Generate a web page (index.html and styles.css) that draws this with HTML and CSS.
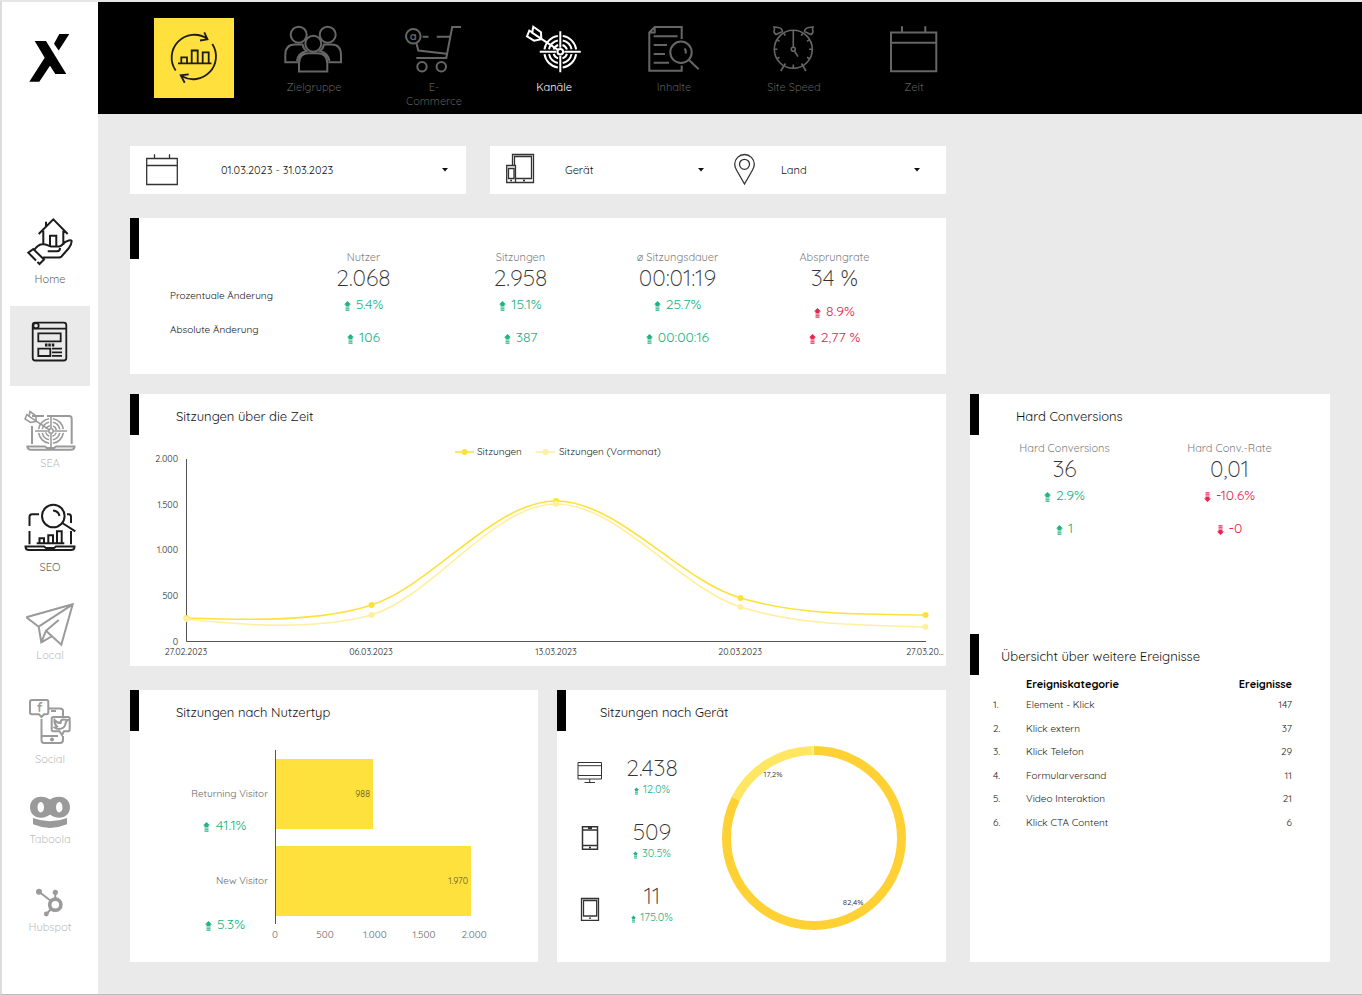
FILE: index.html
```html
<!DOCTYPE html>
<html lang="de">
<head>
<meta charset="utf-8">
<title>Kanäle – Dashboard</title>
<meta name="viewport" content="width=device-width, initial-scale=1">
<link rel="stylesheet" href="styles.css">
</head>
<body>
<svg class="defs" aria-hidden="true">
  <symbol id="arrow" viewBox="0 0 7 10"><path d="M3.5 0L7 3.5H5.5V5h-4V3.500H0zM1.500 5.600h4v1h-4zM1.500 7.200h4v1h-4zM1.500 8.800h4v1h-4z" fill="currentColor"/></symbol>
  <symbol id="target" viewBox="-35 -26 70 52" overflow="visible">
    <g fill="none" stroke="currentColor" stroke-width="2">
      <path d="M0-20.500V-4M0 4V20.500M-20.500 0H-4M4 0H20.500"/>
      <circle r="16" pathLength="4" stroke-dasharray=".8 .2" stroke-dashoffset="-.1"/>
      <circle r="11.500" pathLength="4" stroke-dasharray=".72 .28" stroke-dashoffset="-.14"/>
      <circle r="7" pathLength="4" stroke-dasharray=".6 .4" stroke-dashoffset="-.2"/>
      <circle r="2.800"/>
      <path d="M-2-1.500L-29-19.500M-27-25L-19.300-19.400-19-12.400-26.300-11-33.300-15.400-31-21-28-19.400z"/>
    </g>
  </symbol>
</svg>

<div class="page">
  <aside class="sidebar">
    <svg class="sidebar__logo" viewBox="0 0 80 48" role="img" aria-label="Logo"><path d="M49.300 0H59.300L48.700 16.500 44 9.700zM24.700 7H36L56.300 40H45.300L40 31.700 29.300 47.700H19.300L34.700 23.700z"/></svg>
    <nav class="sidebar__nav" aria-label="Bereiche">
      <a class="item item--on" href="#home">
        <svg class="icon icon--48" viewBox="0 0 80 48"><path d="M28.700 16L43.300 1.300 57.700 16M36 8.500V3.700M33.300 12.700V26M53.300 12.700V27M40 27.500V17.700H46.300V28.500M24.300 32C27 28 29 26.500 32 26.300 36 25.500 38 28 41 28.500H49.500C52 28 54 24 56.700 23.300 59 22.300 61 22 61.700 23 61.500 27 60 28.500 58.500 30.500L51.500 38.500Q50.500 39.500 49 39.500H33M37.700 33.300H47Q50 33.300 50 30M26 42.500L18.300 34.700 23.300 31 34 41.500 29.500 46 27.500 44"/></svg>
        <span class="item__label">Home</span></a>
      <a class="tile tile--grey" href="#website" aria-label="Website">
        <svg class="tile__icon" viewBox="0 0 80 80"><g stroke-width="1.800"><rect x="22.700" y="16.700" width="33.600" height="37.800" rx="2.500"/><path d="M22.700 22.700H56.300M28.300 27.300H50.700V35.300H28.300zM28.300 42.700H40.300V50H28.300zM42 42.700H52M42 46.300H52M42 49.800H52" /><circle cx="26" cy="19.700" r="2.700"/><path d="M35 39h2.500M38.300 39h2.500M41.800 39h2.500" stroke-width="3"/></g></svg></a>
      <a class="item" href="#sea">
        <svg class="icon icon--40" viewBox="0 0 80 40"><path d="M34 6H22M22 16V34M37 6H59Q61.700 6 61.700 9V34M17.300 36.500H35L37 38H44L46 36.500H64.500Q64.500 39.700 61 39.700H21Q17.500 39.700 17.300 36.500z"/><use href="#target" x="13.700" y=".7" width="54.600" height="40.600"/></svg>
        <span class="item__label">SEA</span></a>
      <a class="item item--on" href="#seo">
        <svg class="icon icon--48" viewBox="0 0 80 48"><path d="M29 8.300H22Q19.500 8.300 19.500 11V20M19.500 25V38.300M57 8.300H59Q61 8.300 61 11V17M61 25V38.300M15.500 40.500H34L36 42H44L46 40.500H64.500Q64.500 44 61 44H19Q15.500 44 15.500 40.500zM26.700 37.300H54.300M29.500 37V32.300H34V37M38.300 37V29.300H43V37M47 37V25.300H51.700V37M52.300 17L65.300 25.300M43 4.500Q48.500 5 49.500 10"/><circle cx="43.300" cy="10" r="11.300"/></svg>
        <span class="item__label">SEO</span></a>
      <a class="item" href="#local">
        <svg class="icon icon--40" viewBox="0 0 80 40"><path d="M16.300 15.300L62.700 2.300 51.300 42.700 36 28.700 48.700 18M28.700 24.700L62.700 2.300M16.300 15.300L28.700 24.700 31.300 40.300 41.500 34.500M36 28.700L31.300 40.300"/></svg>
        <span class="item__label">Local</span></a>
      <a class="item" href="#social">
        <svg class="icon icon--48" viewBox="0 0 80 48"><path d="M22 2H36.500Q38.300 2 38.300 4V14.500Q38.300 16.300 36.500 16.300H34L31.500 19 29 16.300H22Q20 16.300 20 14.500V4Q20 2 22 2zM31.500 21V42Q31.500 45 34 45H50Q53 45 53 42V38M38.500 10.500H50Q53 10.500 53 13V18M41 13H46M32 38H48M43.500 19H58Q59.700 19 59.700 21V31.500Q59.700 33.300 58 33.300H54L52 37 49.500 33.300H43.500Q41.700 33.300 41.700 31.500V21Q41.700 19 43.500 19zM44.500 22Q47 25 50.500 25 50.500 21.500 53.500 21.500 55 21.500 57.500 22 55.500 24 55.500 26 54 31 49 31 46 31 44.500 29.500L47 28.500Q44 26 44.500 22z"/><circle cx="42" cy="41.500" r="1"/><text class="icon__letter" x="29.500" y="14" font-size="13">f</text></svg>
        <span class="item__label">Social</span></a>
      <a class="item" href="#taboola">
        <svg class="icon icon--32" viewBox="0 0 80 32"><path class="solid" fill-rule="evenodd" d="M30.700 2.700C34.500 2.700 38 3.800 40 5.500 42 3.800 45.500 2.700 49.300 2.700 55.500 2.700 60 7 60 13.200S55.500 23.700 49.300 23.700C45.500 23.700 42 22.500 40 20.500 38 22.500 34.500 23.700 30.700 23.700 24.500 23.700 20 19.500 20 13.200S24.500 2.700 30.700 2.700zM30.700 8C28.900 8 27.500 10.300 27.500 13.200S28.900 18.400 30.700 18.400 34 16 34 13.200 32.500 8 30.700 8zM49.300 8C47.500 8 46 10.300 46 13.200S47.500 18.400 49.300 18.400 52.500 16 52.500 13.200 51.100 8 49.300 8zM23 24Q40 30.500 57 24V30.300Q40 37.500 23 30.300z"/></svg>
        <span class="item__label">Taboola</span></a>
      <a class="item" href="#hubspot">
        <svg class="icon icon--24" viewBox="0 0 80 24"><circle cx="45.300" cy="14.700" r="5.600" stroke-width="3.600"/><path d="M30 2.500L41 11M45.300 3V9M37 23.500L41 19" stroke-width="2"/><g class="solid"><circle cx="29" cy="1.700" r="3"/><circle cx="45.300" cy="2.300" r="2.600"/><circle cx="36.300" cy="24" r="2.400"/></g></svg>
        <span class="item__label">Hubspot</span></a>
    </nav>
  </aside>

  <div class="content">
    <header class="topbar">
      <a class="tile tile--yellow" href="#overview" aria-label="Übersicht">
        <svg class="tile__icon" viewBox="0 0 80 80"><path stroke-width="1.800" d="M21.700 52.500A22.800 22.800 0 0 1 53 20.500M58.300 26A22.800 22.800 0 0 1 27.500 58M50.300 14.300L53.500 21.300 46 22.500M34.700 56.300L26.700 57.300 30.700 64.700M24 45.300H57.500M27.300 45V39.300H33V45M37.700 45V32.500H43.700V45M48.700 45V34.300H54.700V45"/></svg></a>
      <nav class="topbar__nav" aria-label="Berichte">
        <a class="item" href="#zielgruppe">
          <svg class="icon icon--48" viewBox="0 0 80 48"><circle cx="24.700" cy="8.700" r="8"/><circle cx="53.700" cy="8.700" r="8"/><circle cx="39.300" cy="17.700" r="8"/><path d="M25 45.500V37.500Q25 27.300 35 27.300H43Q53.300 27.300 53.300 37.500V45.500zM24 36.300H11.300V29Q11.300 18.500 21 18.500H28.500Q29.500 23 32.500 25 24 27 23 35M54.500 36.300H67V29Q67 18.500 57.500 18.500H50Q49 23 46 25 54 27 55.500 35"/></svg>
          <span class="item__label">Zielgruppe</span></a>
        <a class="item" href="#ecommerce">
          <svg class="icon icon--48" viewBox="0 0 80 48"><circle cx="19.300" cy="10.300" r="7.300"/><text class="icon__letter" x="19.300" y="14" font-size="11">a</text><path d="M67 1H58.200L52.300 32H22.300M28.700 10.700H34.500M42.700 10.700H55.500M22.500 17.500L24.300 24.500 52.700 27.700"/><circle cx="28" cy="40.700" r="4.700"/><circle cx="47.300" cy="40.700" r="4.700"/></svg>
          <span class="item__label">E-Commerce</span></a>
        <a class="item item--on" href="#kanaele" aria-current="page">
          <svg class="icon icon--48" viewBox="0 0 80 48"><use href="#target" x="11.300" y="-.3" width="70" height="52"/></svg>
          <span class="item__label">Kanäle</span></a>
        <a class="item" href="#inhalte">
          <svg class="icon icon--48" viewBox="0 0 80 48"><path d="M47.700 13V1H20.700L15.300 6.500V44.700H47.700V39.500M20.700 1V6.500H15.300M19.700 10.300H43.500M19.700 19H33M19.700 28H31M19.700 36.700H35M55 34L64.700 43.300M50.500 22.500Q52.500 24.500 51.500 27.500"/><circle cx="47" cy="26.300" r="10.700"/></svg>
          <span class="item__label">Inhalte</span></a>
        <a class="item" href="#sitespeed">
          <svg class="icon icon--48" viewBox="0 0 80 48"><g stroke-width="1.600"><circle cx="39.300" cy="23.300" r="19"/><circle cx="39.300" cy="23.300" r="2"/><path d="M39.300 21V5M40.500 25L44 30.700M31.500 37.500L26.700 45M47.500 37.500L52 45M20.500 23.300H23.500M55 23.300H58M39.300 38.500V42M30 7.500L31.300 9.700M48.700 7.500L47.300 9.700M23.500 14L25.500 15.300M55 14L53 15.300M23.500 32.500L25.500 31.300M55 32.500L53 31.300M20 1L24 1.500Q28 2 28.500 5.500L22 8.500Q19 6.500 20.500 3.500zM59 1L55 1.500Q51 2 50.500 5.500L57 8.500Q60 6.500 58.500 3.500z"/></g></svg>
          <span class="item__label">Site Speed</span></a>
        <a class="item" href="#zeit">
          <svg class="icon icon--48" viewBox="0 0 80 48"><path d="M17 6.500H62.300V45.300H17zM17 16.700H62.300M28 .3V6.500M51.300 .3V6.500"/></svg>
          <span class="item__label">Zeit</span></a>
      </nav>
    </header>

    <main class="main">
      <div class="filters">
        <button class="filter filter--date" type="button">
          <svg class="filter__cal" viewBox="0 0 32 32"><path d="M.7 4.500H31.300V30.500H.7zM.7 11.500H31.300M8.500 .3V4.500M23.500 .3V4.500"/></svg>
          <span class="filter__text">01.03.2023 - 31.03.2023</span>
          <svg class="caret" viewBox="0 0 6 4"><path d="M0 0H6L3 3.500z"/></svg>
        </button>
        <div class="filter filter--pair">
          <div class="picker">
            <label class="picker__icon" for="device" aria-label="Gerät"><svg viewBox="0 0 75 48"><path d="M22.500 19V8.500H43.500V36.500H26M24.500 19V10.500H41.500V32.500H26M16.700 19.500H25.500V36.500H16.700zM18.500 22.500H24V32.500H18.500zM33 34.500H35M20.300 34.500H22"/></svg></label>
            <select class="picker__select" id="device"><option>Gerät</option></select>
            <svg class="caret" viewBox="0 0 6 4"><path d="M0 0H6L3 3.500z"/></svg>
          </div>
          <div class="picker">
            <label class="picker__icon" for="country" aria-label="Land"><svg viewBox="0 0 75 48"><path d="M38.500 38L30.500 24Q28.700 21 28.700 18.300A9.800 9.800 0 0 1 48.300 18.300Q48.300 21 46.500 24z"/><circle cx="38.500" cy="18.300" r="5"/></svg></label>
            <select class="picker__select" id="country"><option>Land</option></select>
            <svg class="caret" viewBox="0 0 6 4"><path d="M0 0H6L3 3.500z"/></svg>
          </div>
        </div>
      </div>

      <section class="card kpis">
        <div class="card__tab"></div>
        <div class="kpis__names"><span>Prozentuale Änderung</span><span>Absolute Änderung</span></div>
        <div class="kpi"><span class="kpi__label">Nutzer</span><span class="kpi__value">2.068</span>
          <div class="kpi__deltas up"><span class="delta"><svg class="arrow"><use href="#arrow"/></svg>5.4%</span><span class="delta"><svg class="arrow"><use href="#arrow"/></svg>106</span></div></div>
        <div class="kpi"><span class="kpi__label">Sitzungen</span><span class="kpi__value">2.958</span>
          <div class="kpi__deltas up"><span class="delta"><svg class="arrow"><use href="#arrow"/></svg>15.1%</span><span class="delta"><svg class="arrow"><use href="#arrow"/></svg>387</span></div></div>
        <div class="kpi"><span class="kpi__label">ø Sitzungsdauer</span><span class="kpi__value">00:01:19</span>
          <div class="kpi__deltas up"><span class="delta"><svg class="arrow"><use href="#arrow"/></svg>25.7%</span><span class="delta"><svg class="arrow"><use href="#arrow"/></svg>00:00:16</span></div></div>
        <div class="kpi kpi--tight"><span class="kpi__label">Absprungrate</span><span class="kpi__value">34 %</span>
          <div class="kpi__deltas down"><span class="delta"><svg class="arrow"><use href="#arrow"/></svg>8.9%</span><span class="delta"><svg class="arrow"><use href="#arrow"/></svg>2,77 %</span></div></div>
      </section>

      <section class="card timeline">
        <header class="card__head"><div class="card__tab"></div><h2 class="card__title">Sitzungen über die Zeit</h2></header>
        <svg class="chart" viewBox="0 0 816 231" role="img" aria-label="Sitzungen über die Zeit">
          <g class="chart__legend">
            <path class="line" d="M325 17H344"/><circle class="dot" cx="334.500" cy="17" r="3"/><text x="347" y="20">Sitzungen</text>
            <path class="line line--pale" d="M406 17H425"/><circle class="dot dot--pale" cx="415.500" cy="17" r="3"/><text x="429" y="20">Sitzungen (Vormonat)</text>
          </g>
          <g class="chart__small end"><text x="48" y="27">2.000</text><text x="48" y="73">1.500</text><text x="48" y="118">1.000</text><text x="48" y="164">500</text><text x="48" y="210">0</text></g>
          <path class="axis" d="M56.500 24V206.500H796"/>
          <path class="line" d="M56.500 183C118 185 190 187 241.500 170 303 150 364 66 426 66 488 66 549 145 610.500 163 672 181 734 179 795.500 180"/>
          <path class="line line--pale" d="M56.500 184C118 191 185 195 241.500 180 303 161 364 69 426 69 488 69 549 152 610.500 172 672 191 734 190 795.500 192"/>
          <g class="dot"><circle cx="56.500" cy="183" r="3"/><circle cx="241.500" cy="170" r="3"/><circle cx="426" cy="66" r="3"/><circle cx="610.500" cy="163" r="3"/><circle cx="795.500" cy="180" r="3"/></g>
          <g class="dot dot--pale"><circle cx="56.500" cy="184" r="3"/><circle cx="241.500" cy="180" r="3"/><circle cx="426" cy="69" r="3"/><circle cx="610.500" cy="172" r="3"/><circle cx="795.500" cy="192" r="3"/></g>
          <g class="chart__small mid"><text x="56" y="220">27.02.2023</text><text x="241" y="220">06.03.2023</text><text x="426" y="220">13.03.2023</text><text x="610" y="220">20.03.2023</text><text x="795" y="220">27.03.20...</text></g>
        </svg>
      </section>

      <div class="pair">
        <section class="card">
          <header class="card__head"><div class="card__tab"></div><h2 class="card__title">Sitzungen nach Nutzertyp</h2></header>
          <svg class="chart" viewBox="0 0 408 231" role="img" aria-label="Sitzungen nach Nutzertyp">
            <path class="bar" d="M146 28H243V98H146zM146 115H341V185H146z"/>
            <path class="axis" d="M145.500 19V193"/>
            <g class="chart__label end"><text x="138" y="66">Returning Visitor</text><text x="138" y="153">New Visitor</text></g>
            <g class="chart__num end"><text x="240" y="66">988</text><text x="338" y="153">1.970</text></g>
            <g class="chart__label mid"><text x="145" y="207">0</text><text x="195" y="207">500</text><text x="245" y="207">1.000</text><text x="294" y="207">1.500</text><text x="344" y="207">2.000</text></g>
            <g class="up"><use href="#arrow" x="73" y="91" width="7" height="10"/><text class="chart__delta" x="86" y="99">41.1%</text><use href="#arrow" x="75" y="190" width="7" height="10"/><text class="chart__delta" x="87" y="198">5.3%</text></g>
          </svg>
        </section>
        <section class="card">
          <header class="card__head card__head--mid"><div class="card__tab"></div><h2 class="card__title">Sitzungen nach Gerät</h2></header>
          <div class="devices">
            <ul class="devices__list">
              <li class="device"><svg class="device__icon" viewBox="0 0 26 42"><path d="M1 8.500H24.500V25H1zM1 11.700H24.500M1 21.500H24.500M12.700 25V28.300M7.500 28.500H18"/></svg><div><span class="kpi__value">2.438</span><span class="device__delta up"><svg class="arrow arrow--s"><use href="#arrow"/></svg>12.0%</span></div></li>
              <li class="device"><svg class="device__icon" viewBox="0 0 26 42"><path stroke-width="1.500" d="M5.500 8.700H20.500V31.300H5.500zM5.500 12H20.500M5.500 27.500H20.500M11 10.300H15M12 29.500H14"/></svg><div><span class="kpi__value">509</span><span class="device__delta up"><svg class="arrow arrow--s"><use href="#arrow"/></svg>30.5%</span></div></li>
              <li class="device"><svg class="device__icon" viewBox="0 0 26 42"><path stroke-width="1.300" d="M4.500 16.500H21.500V38.300H4.500zM6.500 18.500H19.700V34H6.500zM12 36.200H14"/></svg><div><span class="kpi__value">11</span><span class="device__delta up"><svg class="arrow arrow--s"><use href="#arrow"/></svg>175.0%</span></div></li>
            </ul>
            <svg class="donut" viewBox="0 0 184 184" role="img" aria-label="Anteil nach Gerät">
              <g transform="rotate(-90 92 92)"><circle cx="92" cy="92" r="87.500" pathLength="1000" stroke="#ffd135" stroke-dasharray="824 176"/><circle cx="92" cy="92" r="87.500" pathLength="1000" stroke="#ffe763" stroke-dasharray="172 828" stroke-dashoffset="-824"/><circle cx="92" cy="92" r="87.500" pathLength="1000" stroke="#fff0a0" stroke-dasharray="4 996" stroke-dashoffset="-996"/></g>
              <text x="51" y="31">17,2%</text><text x="131" y="159">82,4%</text>
            </svg>
          </div>
        </section>
      </div>

      <section class="card side">
        <div class="side__top">
          <header class="card__head"><div class="card__tab"></div><h2 class="card__title">Hard Conversions</h2></header>
          <div class="side__kpis">
            <div class="kpi"><span class="kpi__label">Hard Conversions</span><span class="kpi__value">36</span>
              <div class="kpi__deltas up"><span class="delta"><svg class="arrow"><use href="#arrow"/></svg>2.9%</span><span class="delta"><svg class="arrow"><use href="#arrow"/></svg>1</span></div></div>
            <div class="kpi"><span class="kpi__label">Hard Conv.-Rate</span><span class="kpi__value">0,01</span>
              <div class="kpi__deltas down"><span class="delta"><svg class="arrow arrow--flip"><use href="#arrow"/></svg>-10.6%</span><span class="delta"><svg class="arrow arrow--flip"><use href="#arrow"/></svg>-0</span></div></div>
          </div>
        </div>
        <header class="card__head card__head--near"><div class="card__tab"></div><h2 class="card__title">Übersicht über weitere Ereignisse</h2></header>
        <table class="events">
          <thead><tr><th class="events__no"></th><th>Ereigniskategorie</th><th class="num">Ereignisse</th></tr></thead>
          <tbody>
            <tr><td>1.</td><td>Element - Klick</td><td class="num">147</td></tr>
            <tr><td>2.</td><td>Klick extern</td><td class="num">37</td></tr>
            <tr><td>3.</td><td>Klick Telefon</td><td class="num">29</td></tr>
            <tr><td>4.</td><td>Formularversand</td><td class="num">11</td></tr>
            <tr><td>5.</td><td>Video Interaktion</td><td class="num">21</td></tr>
            <tr><td>6.</td><td>Klick CTA Content</td><td class="num">6</td></tr>
          </tbody>
        </table>
      </section>
    </main>
  </div>
</div>
</body>
</html>
```
FILE: styles.css
```css
* { box-sizing: border-box; }

body {
  margin: 0;
  background: #eaeaea;
  color: #111;
  font-family: Quicksand, Lato, "Open Sans", sans-serif;
  font-size: 11px;
}

svg { display: block; overflow: visible; }
.defs { width: 0; height: 0; position: absolute; }

.page {
  display: flex;
  min-height: 100vh;
  border-top: 2px solid #e6e6e6;
  border-left: 2px solid #dcdcdc;
  border-bottom: 1px solid #bdbdbd;
}

/* Sidebar */
.sidebar { flex: 0 0 96px; padding: 32px 8px; background: #fff; }
.sidebar__logo { width: 80px; height: 48px; }
.sidebar__nav { display: flex; flex-direction: column; gap: 16px; margin-top: 128px; }

.item {
  width: 80px;
  height: 80px;
  padding-top: 8px;
  color: #9a9a9a;
  text-align: center;
  text-decoration: none;
}
.icon { width: 80px; margin-bottom: 6px; fill: none; stroke: currentColor; stroke-width: 2; }
.icon--48 { height: 48px; }
.icon--40 { height: 40px; }
.icon--32 { height: 32px; }
.icon--24 { height: 24px; }
.icon .solid { fill: currentColor; stroke: none; }
.icon__letter { fill: currentColor; stroke: none; font-weight: 700; text-anchor: middle; }
.item__label { display: block; padding: 0 10px; color: #bdbdbd; font-size: 11px; line-height: 14px; }
.item--on { color: #1c1c1c; }
.item--on .item__label { color: #666; }

.tile { width: 80px; height: 80px; color: #1c1c1c; }
.tile--grey { background: #eaeaea; }
.tile--yellow { background: #ffe03c; }
.tile__icon { width: 80px; height: 80px; fill: none; stroke: currentColor; }

/* Top navigation */
.content { flex: 1; min-width: 0; }
.topbar { display: flex; gap: 40px; height: 112px; padding: 16px 56px; background: #000; }
.topbar__nav { display: flex; gap: 40px; }
.topbar .item { color: #666; }
.topbar .item__label { color: #5c5c5c; }
.topbar .item--on, .topbar .item--on .item__label { color: #fff; }

/* Dashboard grid */
.main {
  display: grid;
  grid-template-columns: 816fr 360fr;
  grid-template-rows: 48px 180px auto auto;
  column-gap: 24px;
  padding: 32px;
}
.main > * { grid-column: 1; }
.main > .kpis { margin-top: 24px; }
.main > .timeline { margin-top: 20px; }
.main > .pair { margin-top: 24px; }
.main > .side { grid-column: 2; grid-row: 3 / 5; margin-top: 20px; }

.card { background: #fff; }
.card__head { display: flex; }
.card__tab { width: 9px; height: 41px; background: #000; }
.card__title { margin: 0; padding: 14px 0 0 37px; font-size: 13px; font-weight: 400; line-height: 16px; }
.card__head--mid .card__title { padding-left: 34px; }
.card__head--near .card__title { padding-left: 22px; }

/* Filters */
.filters { display: grid; grid-template-columns: 336fr 456fr; gap: 24px; }
.filter { display: flex; align-items: center; border: 0; background: #fff; color: #111; font: inherit; }
.filter--date { padding: 0 18px 0 16px; text-align: left; }
.filter__cal { width: 32px; height: 32px; fill: none; stroke: #333; stroke-width: 1.3; }
.filter__text { flex: 1; margin-left: 43px; }
.filter--pair { padding-right: 24px; }
.caret { width: 6px; height: 4px; fill: #111; pointer-events: none; }
.picker { display: flex; flex: 1; align-items: center; padding-right: 2px; }
.picker__icon svg { width: 75px; height: 48px; fill: none; stroke: #333; stroke-width: 1.3; }
.picker__select { flex: 1; min-width: 0; padding: 0; border: 0; background: none; color: inherit; font: inherit; appearance: none; }

/* Key figures */
.kpis { display: grid; grid-template-columns: 40fr 115fr repeat(4, 157fr) 33fr; }
.kpis__names { display: flex; flex-direction: column; gap: 20px; padding-top: 71px; line-height: 14px; font-size: 10px; white-space: nowrap; }
.kpi { display: flex; flex-direction: column; align-items: center; }
.kpis .kpi { padding-top: 32px; }
.kpi__label { color: #808080; font-size: 11px; line-height: 14px; }
.kpi__value { color: #333; font-size: 23px; font-weight: 300; line-height: 28px; }
.kpi__deltas { display: flex; flex-direction: column; justify-content: flex-end; align-items: center; gap: 9px; height: 57px; }
.kpi--tight .kpi__deltas { gap: 2px; }
.delta { display: flex; align-items: center; gap: 5px; font-size: 14px; line-height: 24px; }
.up { color: #22b283; }
.down { color: #e8234f; }
.arrow { width: 7px; height: 10px; margin-top: 4px; }
.arrow--s { width: 5px; height: 8px; }
.arrow--flip { transform: rotate(180deg); }

/* Charts */
.chart { width: 100%; height: auto; }
.chart text { fill: #666; font-size: 10px; }
.chart .chart__legend text { fill: #222; }
.chart .chart__small text { fill: #222; font-size: 9px; }
.chart .chart__num text { fill: #5c5320; font-size: 9px; }
.chart .chart__delta { fill: currentColor; font-size: 14px; }
.end { text-anchor: end; }
.mid { text-anchor: middle; }
.axis { fill: none; stroke: #555; }
.line { fill: none; stroke: #ffe13b; stroke-width: 1.600; }
.line--pale { stroke: #fff0a0; }
.dot { fill: #ffe13b; }
.dot--pale { fill: #fff0a0; }
.bar { fill: #ffe13e; }

.pair { display: grid; grid-template-columns: 408fr 389fr; gap: 19px; }
.devices { display: flex; padding: 15px 40px 32px 20px; }
.devices__list { display: flex; flex: 1; flex-direction: column; gap: 22px; margin: 0; padding: 8px 0 0; list-style: none; }
.device { display: flex; gap: 19px; }
.device__icon { width: 26px; height: 42px; fill: none; stroke: #333; stroke-width: 1; }
.device > div { display: flex; flex-direction: column; align-items: center; width: 60px; }
.device__delta { display: flex; align-items: center; gap: 4px; font-size: 11px; line-height: 14px; }
.donut { width: 184px; height: 184px; fill: none; stroke-width: 9; }
.donut text { fill: #222; font-size: 8px; text-anchor: middle; }

/* Conversions and events */
.side__top { height: 240px; }
.side__kpis { display: grid; grid-template-columns: 1fr 1fr; padding: 6px 18px 0 12px; }
.events { width: calc(100% - 61px); height: 159px; margin-left: 23px; border-collapse: collapse; font-size: 10px; color: #222; }
.events th { padding: 0; height: 18px; color: #000; font-size: 11px; text-align: left; }
.events td { padding: 0; }
.events__no { width: 33px; }
.events .num { text-align: right; }
```
